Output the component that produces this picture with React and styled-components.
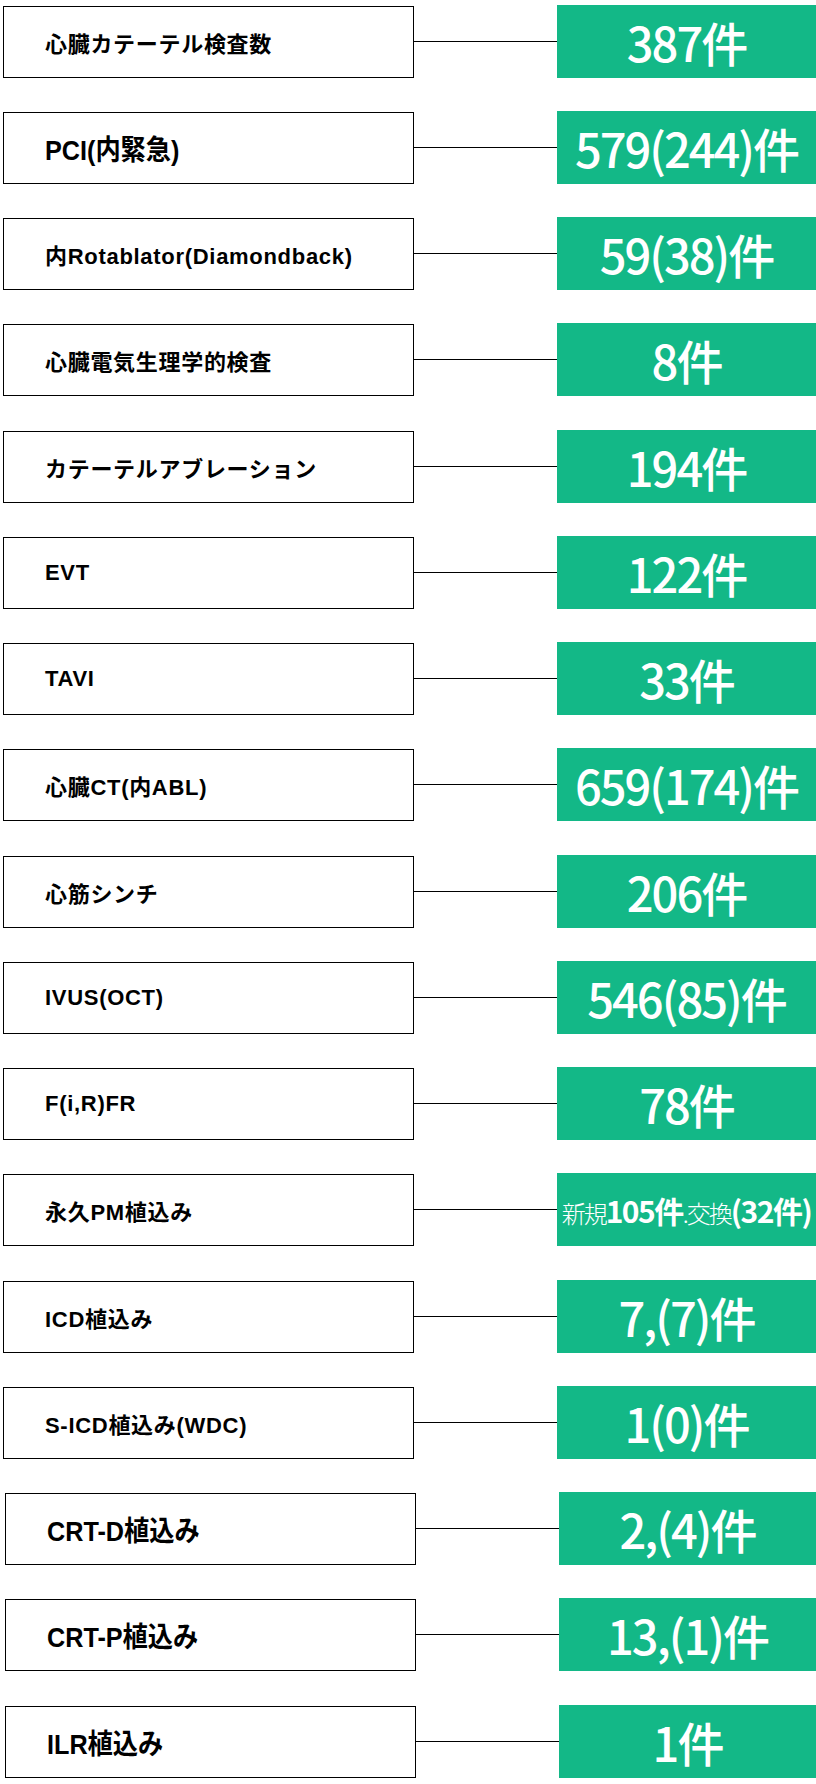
import React from 'react';
import styled, { createGlobalStyle } from 'styled-components';

const GlobalStyle = createGlobalStyle`
  html, body {
    margin: 0;
    padding: 0;
    background: #ffffff;
  }
  body {
    font-family: "Liberation Sans", "Noto Sans CJK JP", sans-serif;
  }
`;

const Page = styled.div`
  width: 816px;
  box-sizing: border-box;
  padding: 5px 0 0 3px;
  display: flex;
  flex-direction: column;
  gap: 33px;
`;

const Row = styled.div`
  display: flex;
  align-items: center;
  height: 73px;
  margin-top: ${({ $extra }) => ($extra ? 1 : 0)}px;
  padding-left: ${({ $shift }) => $shift || 0}px;
`;

const LabelBox = styled.div`
  box-sizing: border-box;
  flex: 0 0 411px;
  height: 72px;
  border: 1.5px solid #000;
  display: flex;
  align-items: center;
  padding-left: 41px;
  color: #000;
  white-space: nowrap;
  overflow: hidden;
`;

const LabelText = styled.span`
  display: inline-block;
  font-weight: 700;
  font-size: ${({ $narrow }) => ($narrow ? 28 : 22)}px;
  letter-spacing: ${({ $narrow }) => ($narrow ? 0 : 0.7)}px;
  transform: ${({ $narrow }) => ($narrow ? 'scaleX(0.9)' : 'none')};
  transform-origin: left center;
`;

const Connector = styled.div`
  flex: 0 0 143px;
  height: 1px;
  background: #000;
`;

const CountBox = styled.div`
  flex: 1;
  height: 73px;
  background: #13b887;
  color: #fff;
  display: flex;
  align-items: center;
  justify-content: center;
  white-space: nowrap;
  overflow: hidden;
  font-family: "Noto Sans CJK JP", sans-serif;
`;

const CountText = styled.span`
  font-size: 47px;
  font-weight: 500;
  line-height: 1;
  letter-spacing: -2px;
`;

const MixedText = styled.span`
  display: flex;
  align-items: baseline;
  line-height: 1;
`;

const Thin = styled.span`
  font-size: 24px;
  font-weight: 300;
  letter-spacing: -2px;
`;

const Bold = styled.span`
  font-size: 30px;
  font-weight: 700;
  letter-spacing: -1.5px;
`;

const rows = [
  { label: '心臓カテーテル検査数', value: '387件' },
  { label: 'PCI(内緊急)', value: '579(244)件', narrow: true },
  { label: '内Rotablator(Diamondback)', value: '59(38)件' },
  { label: '心臓電気生理学的検査', value: '8件' },
  { label: 'カテーテルアブレーション', value: '194件' },
  { label: 'EVT', value: '122件' },
  { label: 'TAVI', value: '33件' },
  { label: '心臓CT(内ABL)', value: '659(174)件' },
  { label: '心筋シンチ', value: '206件' },
  { label: 'IVUS(OCT)', value: '546(85)件' },
  { label: 'F(i,R)FR', value: '78件' },
  { label: '永久PM植込み', mixed: true },
  { label: 'ICD植込み', value: '7,(7)件' },
  { label: 'S-ICD植込み(WDC)', value: '1(0)件' },
  { label: 'CRT-D植込み', value: '2,(4)件', narrow: true, shift: 2 },
  { label: 'CRT-P植込み', value: '13,(1)件', narrow: true, shift: 2 },
  { label: 'ILR植込み', value: '1件', narrow: true, shift: 2 },
];

function PmCount() {
  return (
    <MixedText>
      <Thin>新規</Thin>
      <Bold>105件</Bold>
      <Thin>.交換</Thin>
      <Bold>(32件)</Bold>
    </MixedText>
  );
}

export default function App() {
  return (
    <>
      <GlobalStyle />
      <Page>
        {rows.map((row, i) => (
          <Row key={row.label} $shift={row.shift} $extra={i > 0 && i % 4 === 0}>
            <LabelBox>
              <LabelText $narrow={row.narrow}>{row.label}</LabelText>
            </LabelBox>
            <Connector />
            <CountBox>
              {row.mixed ? <PmCount /> : <CountText>{row.value}</CountText>}
            </CountBox>
          </Row>
        ))}
      </Page>
    </>
  );
}
